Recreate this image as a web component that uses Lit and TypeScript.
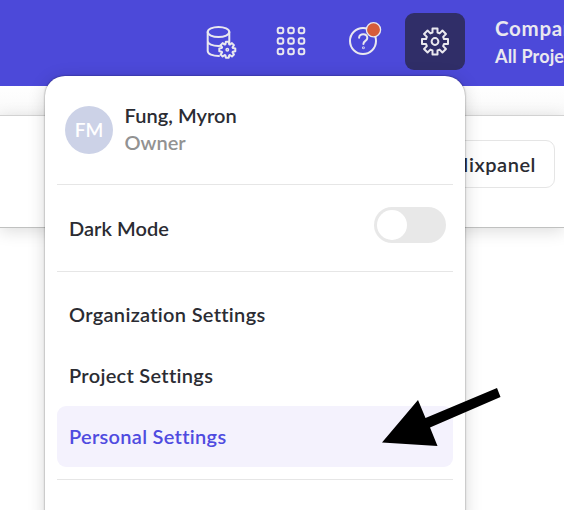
import { LitElement, html, css, svg } from "lit";
import { customElement } from "lit/decorators.js";

/** Outline of a cog with square-cornered teeth. */
function cog(cx: number, cy: number, outer: number, inner: number, teeth: number, half: number, taper = 1): string {
  const points: string[] = [];
  for (let i = 0; i < teeth; i++) {
    const a = (i * 2 * Math.PI) / teeth - Math.PI / 2;
    const corners = [[inner, -half], [outer, -half * taper], [outer, half * taper], [inner, half]];
    for (const [r, t] of corners) {
      const x = cx + r * Math.cos(a) - t * Math.sin(a);
      const y = cy + r * Math.sin(a) + t * Math.cos(a);
      points.push(`${x.toFixed(2)} ${y.toFixed(2)}`);
    }
  }
  return `M${points.join("L")}Z`;
}

@customElement("app-root")
export class AppRoot extends LitElement {
  static styles = css`
    :host {
      display: block;
      position: relative;
      width: 564px;
      height: 510px;
      overflow: hidden;
      background: #fff;
      color: #2b2c33;
      font: 600 20px/26px Lato, "Liberation Sans", sans-serif;
      white-space: nowrap;
    }
    * { box-sizing: border-box; }
    svg { display: block; fill: none; stroke: #e9e8ef; stroke-width: 2; stroke-linejoin: round; stroke-linecap: round; overflow: visible; }
    .header {
      height: 86px;
      background: #4c49d9;
      display: flex;
      align-items: flex-start;
      padding: 13px 0 0 190px;
      color: #e9e8ef;
    }
    .tool { width: 60px; height: 56px; margin-right: 12px; flex: none; display: grid; place-items: center; border-radius: 9px; }
    .tool:first-child { width: 61px; margin-right: 10px; }
    .tool.active { height: 57px; background: #302e68; margin: 0 30px 0 0; }
    .company { font-weight: 700; line-height: 27px; padding-top: 2px; }
    .company div:first-child { font-size: 20.5px; letter-spacing: 0.7px; }
    .company div + div { font-size: 18px; letter-spacing: 0.15px; line-height: 28px; }
    .gap { height: 29px; background: linear-gradient(#fff, #f9f9f9); }
    .bar {
      height: 113px;
      border-top: 1px solid #d2d2d2;
      border-bottom: 1px solid #c0c1c0;
      box-shadow: 0 3px 16px rgba(0, 0, 0, 0.14);
      display: flex;
      justify-content: flex-end;
      padding: 24px 9px 0 0;
    }
    .chip { height: 48px; width: 140px; border: 1px solid #e5e5e5; border-radius: 9px; text-align: right; padding: 10px 18px 0 0; letter-spacing: 0.55px; }
    .menu {
      position: absolute;
      left: 45px;
      top: 76px;
      width: 420px;
      height: 460px;
      background: #fff;
      border-radius: 20px;
      padding: 0 12px;
      box-shadow: 0 0 2px rgba(0, 0, 0, 0.5), 0 3px 18px rgba(0, 0, 0, 0.16);
    }
    .profile { height: 109px; border-bottom: 1px solid #e6e6e6; display: flex; padding: 26px 8px 0; gap: 11.5px; }
    .avatar { width: 48px; height: 48px; margin-top: 4px; border-radius: 50%; background: #ccd2e7; color: #fff; display: grid; place-items: center; font-size: 19px; }
    .name { line-height: 27px; letter-spacing: 0.05px; }
    .role { color: #929292; line-height: 27px; }
    .mode { height: 87px; border-bottom: 1px solid #e6e6e6; display: flex; justify-content: space-between; padding: 22px 7px 0 12px; }
    .mode span { padding-top: 8px; letter-spacing: 0.05px; }
    .toggle { width: 72px; height: 36px; border-radius: 18px; background: #e8e8e8; padding: 3px; }
    .toggle::before { content: ""; display: block; width: 30px; height: 30px; border-radius: 50%; background: #fff; }
    .items { padding: 12px 0; border-bottom: 1px solid #e6e6e6; }
    .item { height: 61px; line-height: 61px; padding-left: 12px; border-radius: 9px; letter-spacing: 0.3px; }
    .item.selected { background: #f4f2fd; color: #4f4be0; }
    .arrow { position: absolute; left: 382px; top: 388px; fill: #000; stroke: none; }
    .badge { fill: #d65c3b; stroke-width: 1.3; }
    .cutout { fill: #4c49d9; }
  `;

  private grid() {
    return [4.5, 15, 25.5].map((y) => [4.5, 15, 25.5].map((x) =>
      svg`<rect x=${x - 2.8} y=${y - 2.8} width="5.6" height="5.6" rx="2"/>`));
  }

  render() {
    return html`
      <div class="header">
        <div class="tool"><svg width="30" height="32" viewBox="0 0 30 32">
          <ellipse cx="12.5" cy="7" rx="10.8" ry="5"/>
          <path d="M1.7 7V26C1.7 29 6.5 31 13 31M23.3 7V18M1.7 16C1.7 19 6.5 21 12.5 21Q15 21 17 20.3"/>
          <path class="cutout" d=${cog(21.3, 24.8, 8, 5.5, 8, 1.9, 0.75)} />
          <circle cx="21.3" cy="24.8" r="1.2" stroke-width="1.5"/>
        </svg></div>
        <div class="tool"><svg width="30" height="30" viewBox="0 0 30 30">${this.grid()}</svg></div>
        <div class="tool"><svg width="30" height="30" viewBox="0 0 30 30">
          <circle cx="15" cy="15" r="13"/>
          <path d="M11.1 11.8C11.1 7 19.3 6.8 19.3 12C19.3 15 15.4 14.8 15.4 18"/>
          <circle cx="15.4" cy="21.8" r=".4"/>
          <circle class="badge" cx="25.5" cy="3.7" r="7.1"/>
        </svg></div>
        <div class="tool active"><svg width="28" height="28" viewBox="0 0 28 28">
          <path d=${cog(14, 13.5, 13, 9, 8, 2.5)} />
          <circle cx="14" cy="13.5" r="3.4"/>
        </svg></div>
        <div class="company"><div>Company</div><div>All Projects</div></div>
      </div>
      <div class="gap"></div>
      <div class="bar"><div class="chip">Mixpanel</div></div>
      <div class="menu">
        <div class="profile">
          <div class="avatar">FM</div>
          <div><div class="name">Fung, Myron</div><div class="role">Owner</div></div>
        </div>
        <div class="mode"><span>Dark Mode</span><div class="toggle"></div></div>
        <div class="items">
          <div class="item">Organization Settings</div>
          <div class="item">Project Settings</div>
          <div class="item selected">Personal Settings</div>
        </div>
      </div>
      <svg class="arrow" width="119" height="59" viewBox="0 0 119 59"><path d="M0 54.5L36 12L43.5 30L115 0L118.5 9L48 39.5L55.5 58Z"/></svg>
    `;
  }
}
